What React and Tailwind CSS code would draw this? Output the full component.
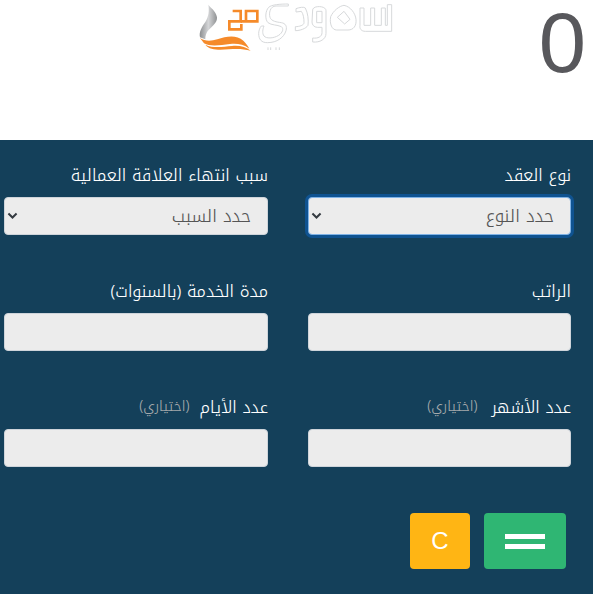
function Logo() {
  return (
    <svg width="240" height="70" viewBox="0 0 720 210" className="block">
      <defs>
        <linearGradient id="g" x1="0" y1="0" x2="1" y2="0">
          <stop offset="0" stopColor="#8c8e90" />
          <stop offset="0.5" stopColor="#d5d6d8" />
          <stop offset="1" stopColor="#8f9193" />
        </linearGradient>
      </defs>
      <path d="M85 14 C90 22 108 32 111 52 C112 68 98 78 86 90 C78 98 76 108 76 118 L60 112 C56 96 66 80 76 66 C86 50 88 32 85 14 Z" fill="url(#g)" />
      <path d="M60 114 C74 124 92 124 112 118 C140 108 170 104 190 122 C198 130 204 138 208 146 C190 132 170 130 150 132 C120 136 90 140 72 130 Z" fill="#f58a2a" />
      <path d="M76 134 C100 146 130 140 156 138 C178 136 198 140 212 152 C190 146 170 146 146 148 C120 150 90 152 76 134 Z" fill="#f58a2a" />
      <g fill="none" stroke="#f58a2a" strokeWidth="8">
        <path d="M158 33 L182 33 L182 64 L148 64 L148 88 L184 88 L184 72" />
        <path d="M182 64 L232 64 L232 33 L198 33 L198 62" />
      </g>
      <g fill="none" stroke="#d7d9db" strokeWidth="3">
        <path d="M325 18 L288 18 C270 18 266 40 270 52 C274 64 290 66 304 68 C316 70 322 78 318 92 C312 112 292 128 262 128 C244 128 236 118 236 100 C236 92 240 82 244 78 L252 78 C248 88 246 100 252 108 C258 116 280 116 296 106 C308 98 312 86 304 80 C292 74 274 76 264 68 C254 58 256 32 266 22 C274 14 300 12 325 12 Z" />
        <path d="M348 26 C358 22 372 20 376 24 C384 40 386 60 384 76 C378 86 360 92 346 92 L346 80 C358 80 372 76 372 68 C372 54 370 42 364 34 L348 36 Z" />
        <path d="M398 30 C398 16 438 16 438 32 L438 100 C438 118 420 128 398 126 L398 114 C414 116 426 110 426 98 L426 82 L412 82 C402 82 396 74 396 66 Z M410 34 L426 34 L426 68 L410 68 Z" />
        <path d="M452 50 C460 32 478 18 492 16 C512 20 526 40 528 58 C530 78 520 90 504 90 L470 90 C456 90 448 72 452 50 Z M472 52 L492 34 L510 58 L494 72 Z" />
        <path d="M540 24 L552 24 L552 76 L572 76 L572 24 L584 24 L584 76 L604 76 L604 24 L616 24 L616 76 L622 76 L622 14 L635 14 L635 94 L556 94 C544 94 538 86 540 76 Z" />
      </g>
      <path d="M264 142 L264 150 M272 142 L272 150 M288 142 L288 150 M298 142 L298 150" stroke="#d7d9db" strokeWidth="3" />
    </svg>
  );
}

function Label({ text, optional, tight }) {
  return (
    <div className={`flex items-center h-[24px] font-['Noto_Kufi_Arabic',sans-serif] font-light text-[16.8px] leading-[24px] text-white ${tight ? "gap-[10px]" : "gap-[14px]"}`}>
      <span>{text}</span>
      {optional && <span className="text-[14px] text-[#a6aaac]">(اختياري)</span>}
    </div>
  );
}

function Select({ text, focused }) {
  return (
    <div
      className={`relative flex items-center h-[38px] rounded-[4px] bg-[#ececec] pr-[16px] font-['Noto_Kufi_Arabic',sans-serif] font-light text-[17.6px] text-[#555555] border ${
        focused ? "border-[#7fb2e5] ring-[3px] ring-[#0f5391]" : "border-[#ced4da]"
      }`}
    >
      <span>{text}</span>
      <svg width="13" height="13" viewBox="0 0 16 16" className="absolute left-[1px] top-[11px]">
        <path d="M3 5.5 L8 10.5 L13 5.5" fill="none" stroke="#343a40" strokeWidth="2.4" />
      </svg>
    </div>
  );
}

function Input() {
  return <div className="h-[38px] rounded-[4px] bg-[#ececec] border border-[#ced4da]" />;
}

function Field({ label, optional, tight, children }) {
  return (
    <div className="flex flex-col gap-[10px]">
      <Label text={label} optional={optional} tight={tight} />
      {children}
    </div>
  );
}

export default function App() {
  return (
    <div className="w-[593px] h-[594px] overflow-hidden bg-white" dir="rtl">
      <header className="relative h-[140px] bg-white">
        <div dir="ltr" className="absolute left-[180px] top-0"><Logo /></div>
        <div className="absolute right-[7px] top-0 font-['Liberation_Sans',sans-serif] text-[85px] leading-[85px] text-[#58585c]">0</div>
      </header>
      <main className="h-[454px] bg-[#14405a] pt-[23px] pr-[22px] pl-[4px]">
        <div className="grid grid-cols-[263px_264px] gap-x-[40px] gap-y-[44px]">
          <Field label="نوع العقد"><Select text="حدد النوع" focused /></Field>
          <Field label="سبب انتهاء العلاقة العمالية"><Select text="حدد السبب" /></Field>
          <Field label="الراتب"><Input /></Field>
          <Field label="مدة الخدمة (بالسنوات)"><Input /></Field>
          <Field label="عدد الأشهر" optional><Input /></Field>
          <Field label="عدد الأيام" optional tight><Input /></Field>
        </div>
        <div className="flex gap-[14px] mt-[46px] mr-[5px]">
          <button className="flex flex-col items-center justify-center gap-[5px] w-[82px] h-[56px] rounded-[4px] bg-[#2fb673]">
            <span className="block w-[40px] h-[5px] bg-white" />
            <span className="block w-[40px] h-[5px] bg-white" />
          </button>
          <button className="w-[60px] h-[56px] rounded-[4px] bg-[#ffb514] font-['Liberation_Sans',sans-serif] text-white text-[24px]">C</button>
        </div>
      </main>
    </div>
  );
}
